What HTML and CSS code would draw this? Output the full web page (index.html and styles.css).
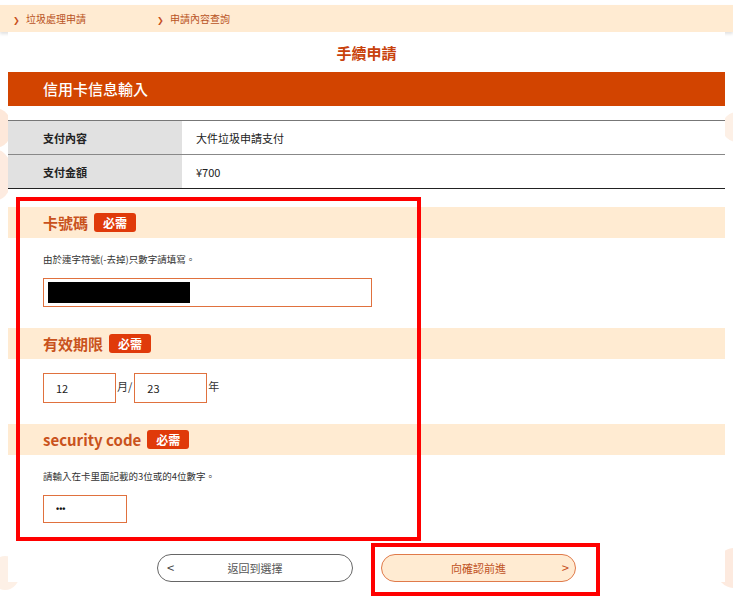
FILE: index.html
```html
<!DOCTYPE html>
<html>
<head>
  <title>手續申請</title>
  <link rel="stylesheet" href="styles.css">
</head>
<body>

<div class="deco deco-l1"></div>
<div class="deco deco-l2"></div>
<div class="deco deco-r1"></div>
<div class="deco deco-r2"></div>
<div class="deco deco-r3"></div>

<nav class="crumbs">
  <a class="crumb">垃圾處理申請</a>
  <a class="crumb">申請內容查詢</a>
</nav>

<div class="page">
  <h1 class="title">手續申請</h1>

  <h2 class="bar">信用卡信息輸入</h2>

  <table class="info">
    <tr>
      <th>支付內容</th>
      <td>大件垃圾申請支付</td>
    </tr>
    <tr>
      <th>支付金額</th>
      <td>¥700</td>
    </tr>
  </table>

  <div class="sec">
    <div class="sec-head">卡號碼 <span class="req">必需</span></div>
    <div class="sec-body">
      <p class="help">由於連字符號(-去掉)只數字請填寫。</p>
      <div class="field field-card"><span class="redact"></span></div>
    </div>
  </div>

  <div class="sec">
    <div class="sec-head">有效期限 <span class="req">必需</span></div>
    <div class="sec-body">
      <div class="expiry">
        <input class="field field-short" type="text" value="12"><span class="unit">月/</span><input class="field field-short" type="text" value="23"><span class="unit">年</span>
      </div>
    </div>
  </div>

  <div class="sec">
    <div class="sec-head">security code <span class="req">必需</span></div>
    <div class="sec-body">
      <p class="help">請輸入在卡里面記載的3位或的4位數字。</p>
      <input class="field field-cvc" type="text" value="•••">
    </div>
  </div>

  <div class="actions">
    <button type="button" class="btn btn-back"><span class="arrow">&lt;</span>返回到選擇</button>
    <button type="button" class="btn btn-next">向確認前進<span class="arrow">&gt;</span></button>
  </div>
</div>

<div class="mark mark-form"></div>
<div class="mark mark-next"></div>

</body>
</html>
```

FILE: styles.css
```css
html, body {
  margin: 0;
  padding: 0;
}

body {
  font-family: "Noto Sans CJK TC", "Noto Sans", sans-serif;
  color: #333;
  background: #fff;
  position: relative;
  width: 733px;
  height: 596px;
  overflow: hidden;
}

.deco {
  position: absolute;
  border-radius: 50%;
  background: #fde8da;
  z-index: 0;
}
.deco-l1 { left: -22px; top: 108px; width: 34px; height: 40px; }
.deco-l2 { left: -18px; top: 150px; width: 30px; height: 50px; background: #fdebe0; }
.deco-r1 { left: 722px; top: 112px; width: 30px; height: 30px; background: #fdf0e6; }
.deco-r2 { left: 716px; top: 548px; width: 36px; height: 40px; background: #fdeadf; }
.deco-r3 { left: -10px; top: 556px; width: 30px; height: 34px; background: #fdf0e6; }

.crumbs {
  position: relative;
  z-index: 1;
  margin-top: 5px;
  height: 27px;
  background: #ffebd2;
  box-shadow: 0 2px 3px rgba(0, 0, 0, 0.12);
  display: flex;
  align-items: center;
  padding-left: 13px;
}

.crumb {
  width: 144px;
  font-size: 10px;
  color: #b9531f;
}

.crumb:before {
  content: "\276F";
  font-size: 8px;
  margin-right: 6px;
  color: #c8501c;
}

.page {
  position: relative;
  z-index: 1;
  margin: 0 8px;
  background: #fff;
}

.title {
  margin: 0;
  padding: 9px 0 8px;
  text-align: center;
  font-size: 15px;
  line-height: 23px;
  color: #c8420c;
}

.bar {
  margin: 0;
  height: 34px;
  line-height: 34px;
  background: #d24400;
  color: #fff;
  font-size: 15px;
  font-weight: 500;
  padding-left: 35px;
}

.info {
  width: 100%;
  margin-top: 14px;
  border-collapse: collapse;
  border-top: 1px solid #777;
  border-bottom: 1px solid #222;
  font-size: 11px;
}

.info th,
.info td {
  height: 33px;
  padding: 0;
  text-align: left;
}

.info tr + tr th,
.info tr + tr td {
  border-top: 1px solid #888;
}

.info th {
  width: 139px;
  background: #e1e1e1;
  padding-left: 35px;
  color: #222;
}

.info td {
  padding-left: 14px;
  color: #222;
}

.sec:first-of-type {
  margin-top: 18px;
}

.sec-head {
  height: 31px;
  display: flex;
  align-items: center;
  background: #ffebd2;
  padding-left: 35px;
  font-size: 15px;
  font-weight: bold;
  color: #c9521c;
}

.req {
  margin-left: 6px;
  background: #e03a0a;
  color: #fff;
  font-size: 12px;
  line-height: 19px;
  padding: 0 9px;
  border-radius: 3px;
}

.sec-body {
  padding: 14px 35px 21px;
}

.help {
  margin: 0 0 12px;
  font-size: 9.5px;
  line-height: 14px;
  color: #333;
}

.sec:last-of-type .help {
  margin-bottom: 11px;
}

.field {
  box-sizing: border-box;
  display: block;
  border: 1px solid #e0713e;
  background: #fff;
  font-family: inherit;
  font-size: 11px;
  color: #222;
  padding: 0 12px;
  margin: 0;
  outline: none;
}

.field-card {
  width: 329px;
  height: 29px;
  padding: 3px 4px;
}

.redact {
  display: block;
  width: 142px;
  height: 21px;
  background: #000;
}

.expiry {
  display: flex;
  align-items: flex-start;
}

.field-short {
  width: 73px;
  height: 30px;
}

.unit {
  font-size: 11px;
  line-height: 26px;
  padding: 0 2px 0 1px;
}

.field-cvc {
  width: 84px;
  height: 28px;
  font-family: "Liberation Sans", sans-serif;
  font-size: 9px;
  font-weight: bold;
  letter-spacing: 0;
  color: #111;
}

.actions {
  display: flex;
  justify-content: center;
  gap: 28px;
  padding-top: 10px;
}

.btn {
  position: relative;
  width: 196px;
  height: 28px;
  border-radius: 14px;
  font-family: inherit;
  font-size: 11px;
  cursor: pointer;
  padding: 0;
}

.btn-back {
  background: #fff;
  border: 1px solid #666;
  color: #555;
}

.btn-next {
  width: 195px;
  background: #ffebd2;
  border: 1px solid #e07a4a;
  color: #c0521e;
}

.btn .arrow {
  position: absolute;
  top: 5px;
  font-size: 13px;
  line-height: 16px;
}

.btn-back .arrow {
  left: 9px;
  color: #444;
}

.btn-next .arrow {
  right: 6px;
  color: #c8501c;
}

.mark {
  position: absolute;
  z-index: 2;
  border: 4px solid #ff0000;
  box-sizing: border-box;
}

.mark-form {
  left: 16px;
  top: 197px;
  width: 405px;
  height: 344px;
}

.mark-next {
  left: 371px;
  top: 543px;
  width: 229px;
  height: 53px;
}
```
